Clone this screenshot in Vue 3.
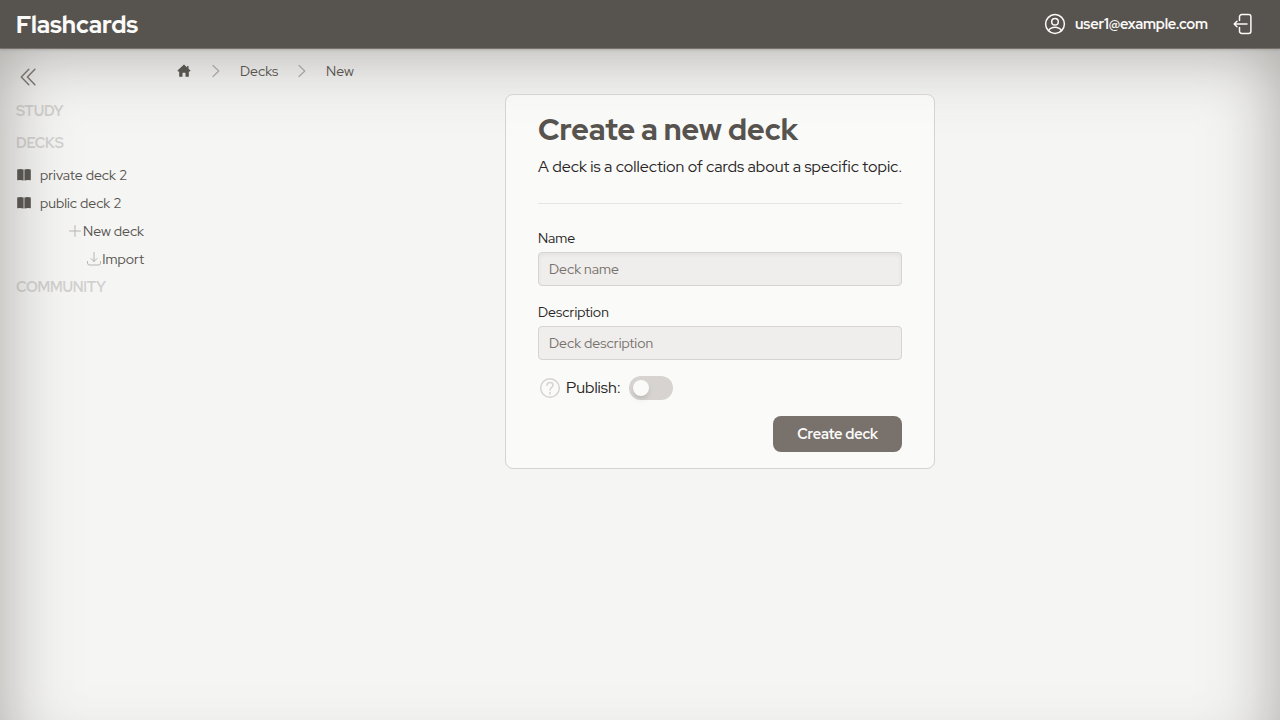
<script setup>
const decks = ['private deck 2', 'public deck 2']
</script>

<template>
  <div class="page">
    <header class="topbar">
      <span class="brand">Flashcards</span>
      <div class="account">
        <svg class="i24" viewBox="0 0 24 24">
          <circle cx="12" cy="12" r="9.4" />
          <circle cx="12" cy="9.7" r="3.3" />
          <path d="M5.6 18.5c1.5-2.3 3.6-3.2 6.4-3.2s4.900.9 6.400 3.200" />
        </svg>
        <span class="email">user1@example.com</span>
        <svg class="i24 logout" viewBox="0 0 24 24">
          <path d="M8.500 8.500V4.800a2.200 2.200 0 0 1 2.200-2.200h7a2.200 2.200 0 0 1 2.200 2.200v14.400a2.200 2.200 0 0 1-2.200 2.200h-7a2.200 2.200 0 0 1-2.200-2.200v-3.700" />
          <path d="M16 12H3.500M6 9.200 3.200 12 6 14.800" />
        </svg>
      </div>
    </header>
    <div class="body">
      <aside class="side">
        <svg class="i24 collapse" viewBox="0 0 24 24"><path d="M12.800 4.300 5.300 12l7.500 7.700M18.900 4.300 11.400 12l7.500 7.700" /></svg>
        <h2>STUDY</h2>
        <h2>DECKS</h2>
        <a v-for="d in decks" :key="d" class="deck">
          <svg viewBox="0 0 16 16"><path d="M1.200 2.500Q4.500 1.600 7.600 2.500v11Q4.500 12.700 1.200 13.300ZM8.400 2.500q3.100-.9 6.400 0v10.800q-3.300-.6-6.400.2Z" /></svg>
          <span>{{ d }}</span>
        </a>
        <a class="action">
          <svg viewBox="0 0 16 16"><path d="M8 2.500v11M2.500 8h11" /></svg>
          <span>New deck</span>
        </a>
        <a class="action">
          <svg viewBox="0 0 16 16"><path d="M8 1.500v9M5 7.500l3 3 3-3M1.500 10.500v1.500a2 2 0 0 0 2 2h9a2 2 0 0 0 2-2v-1.500" /></svg>
          <span>Import</span>
        </a>
        <h2 class="community">COMMUNITY</h2>
      </aside>
      <main>
        <nav>
          <svg class="home" viewBox="0 0 16 16"><path d="M8 1.500 1.500 7.500 2 8.500h1.200v5.200h3.300v-4h3v4h3.300V8.500H14l.5-1-2-1.800V3h-1.400v1.400Z" /></svg>
          <svg class="sep" viewBox="0 0 16 16"><path d="m5 2.500 5.800 5.500L5 13.500" /></svg>
          <span class="crumb-decks">Decks</span>
          <svg class="sep" viewBox="0 0 16 16"><path d="m5 2.500 5.800 5.500L5 13.500" /></svg>
          <span>New</span>
        </nav>
        <section class="card">
          <h1>Create a new deck</h1>
          <p>A deck is a collection of cards about a specific topic.</p>
          <hr />
          <label>Name</label>
          <input class="in-name" placeholder="Deck name" />
          <label>Description</label>
          <input placeholder="Deck description" />
          <div class="publish">
            <svg class="i24" viewBox="0 0 24 24">
              <circle cx="12" cy="12" r="9.300" />
              <path d="M9 9.300c0-1.700 1.200-2.800 3-2.800s3 1.100 3 2.700c0 2.300-3 2.200-3 5.100" />
              <path d="M12 16.600v1.400" />
            </svg>
            <span class="pub">Publish:</span>
            <span class="toggle"><i></i></span>
          </div>
          <button><span>Create deck</span></button>
        </section>
      </main>
    </div>
  </div>
</template>

<style>
body { margin: 0; overflow: hidden; }
</style>

<style scoped>
* { box-sizing: border-box; }
.page {
  width: 1280px; height: 720px; overflow: hidden; background: #f5f5f4; color: #57534e;
  font: 400 14px/20px "Red Hat Display", "Red Hat Text", Inter, sans-serif;
}
svg { display: block; flex: none; fill: none; stroke: currentColor; stroke-width: 1.5; stroke-linecap: round; stroke-linejoin: round; }
span { white-space: nowrap; }
.i24 { width: 24px; height: 24px; }
.topbar {
  position: relative; display: flex; align-items: center; justify-content: space-between;
  height: 49px; padding: 0 25px 0 16px; background: #57534e; border-bottom: 1px solid #78716c;
  color: #fafaf9; box-shadow: 0 1px 3px rgba(0, 0, 0, .1), 0 1px 2px -1px rgba(0, 0, 0, .1);
}
.brand { padding-top: 2px; font-size: 24px; line-height: 32px; font-weight: 800; letter-spacing: -.05px; }
.account { display: flex; align-items: center; }
.email { width: 133px; margin-left: 8px; font-size: 14.6px; font-weight: 700; letter-spacing: -.15px; }
.logout { margin-left: 23px; }
.body { display: flex; height: 720px; box-shadow: inset 0 0 70px rgba(87, 83, 78, .5); }
.side { width: 160px; padding: 16px; }
.collapse { color: #78716c; margin-bottom: 12px; }
h2 { margin: 0 0 12px; font-size: 14.6px; line-height: 20px; font-weight: 700; letter-spacing: -.25px; color: #78716c; opacity: .27; }
.community { margin-top: 8px; }
.deck, .action { display: flex; align-items: center; height: 20px; margin-bottom: 8px; }
.deck svg { width: 16px; height: 16px; margin-right: 8px; fill: currentColor; stroke: none; }
.action { justify-content: flex-end; }
.action svg { width: 16px; height: 16px; color: #b8b4b1; stroke-width: 1; }
main { flex: 1; padding: 12px 0 0; }
nav { display: flex; align-items: center; height: 20px; padding-left: 16px; }
nav svg { width: 16px; height: 16px; }
.home { fill: currentColor; stroke: none; }
.sep { color: #a8a29e; stroke-width: 1.200; margin: 0 16px; }
.crumb-decks { width: 38px; }
.card {
  display: flex; flex-direction: column; width: 430px; height: 375px; margin: 13px auto 0;
  padding: 16px 32px; border: 1px solid #d6d3d1; border-radius: 8px; background: rgba(255, 255, 253, .5);
  color: #292524;
}
h1 { margin: 0; color: #57534e; font-size: 30px; line-height: 36px; font-weight: 800; white-space: nowrap; }
p { margin: 8px 0 24px; font-size: 16px; line-height: 24px; white-space: nowrap; }
hr { width: 100%; height: 1px; margin: 0 0 24px; border: 0; background: #e7e5e4; }
label { line-height: 20px; margin-bottom: 4px; }
input {
  width: 100%; height: 34px; margin: 0 0 16px; padding: 0 10px; border: 1px solid #d6d3d1; border-radius: 4px;
  background: #efeeec; font: inherit; color: #292524; outline: 0;
}
.in-name { box-shadow: inset 0 2px 4px rgba(0, 0, 0, .05); }
input::placeholder { color: #78716c; opacity: 1; }
.publish { display: flex; align-items: center; height: 24px; font-size: 16px; line-height: 24px; }
.publish .i24 { color: #d6d3d1; }
.pub { width: 55px; margin: 0 8px 0 4px; }
.toggle { display: flex; align-items: center; width: 44px; height: 24px; padding-left: 4px; border-radius: 12px; background: #d6d3d1; }
.toggle i { width: 16px; height: 16px; border-radius: 50%; background: #fafaf9; box-shadow: 0 4px 6px -1px rgba(0, 0, 0, .1), 0 2px 4px -2px rgba(0, 0, 0, .1); }
button {
  align-self: flex-end; width: 129px; height: 36px; margin-top: 16px; padding: 0; border: 0; border-radius: 8px;
  background: #78716c; color: #fafaf9; font: inherit; font-size: 14.6px; font-weight: 700; letter-spacing: -.15px;
}
</style>
